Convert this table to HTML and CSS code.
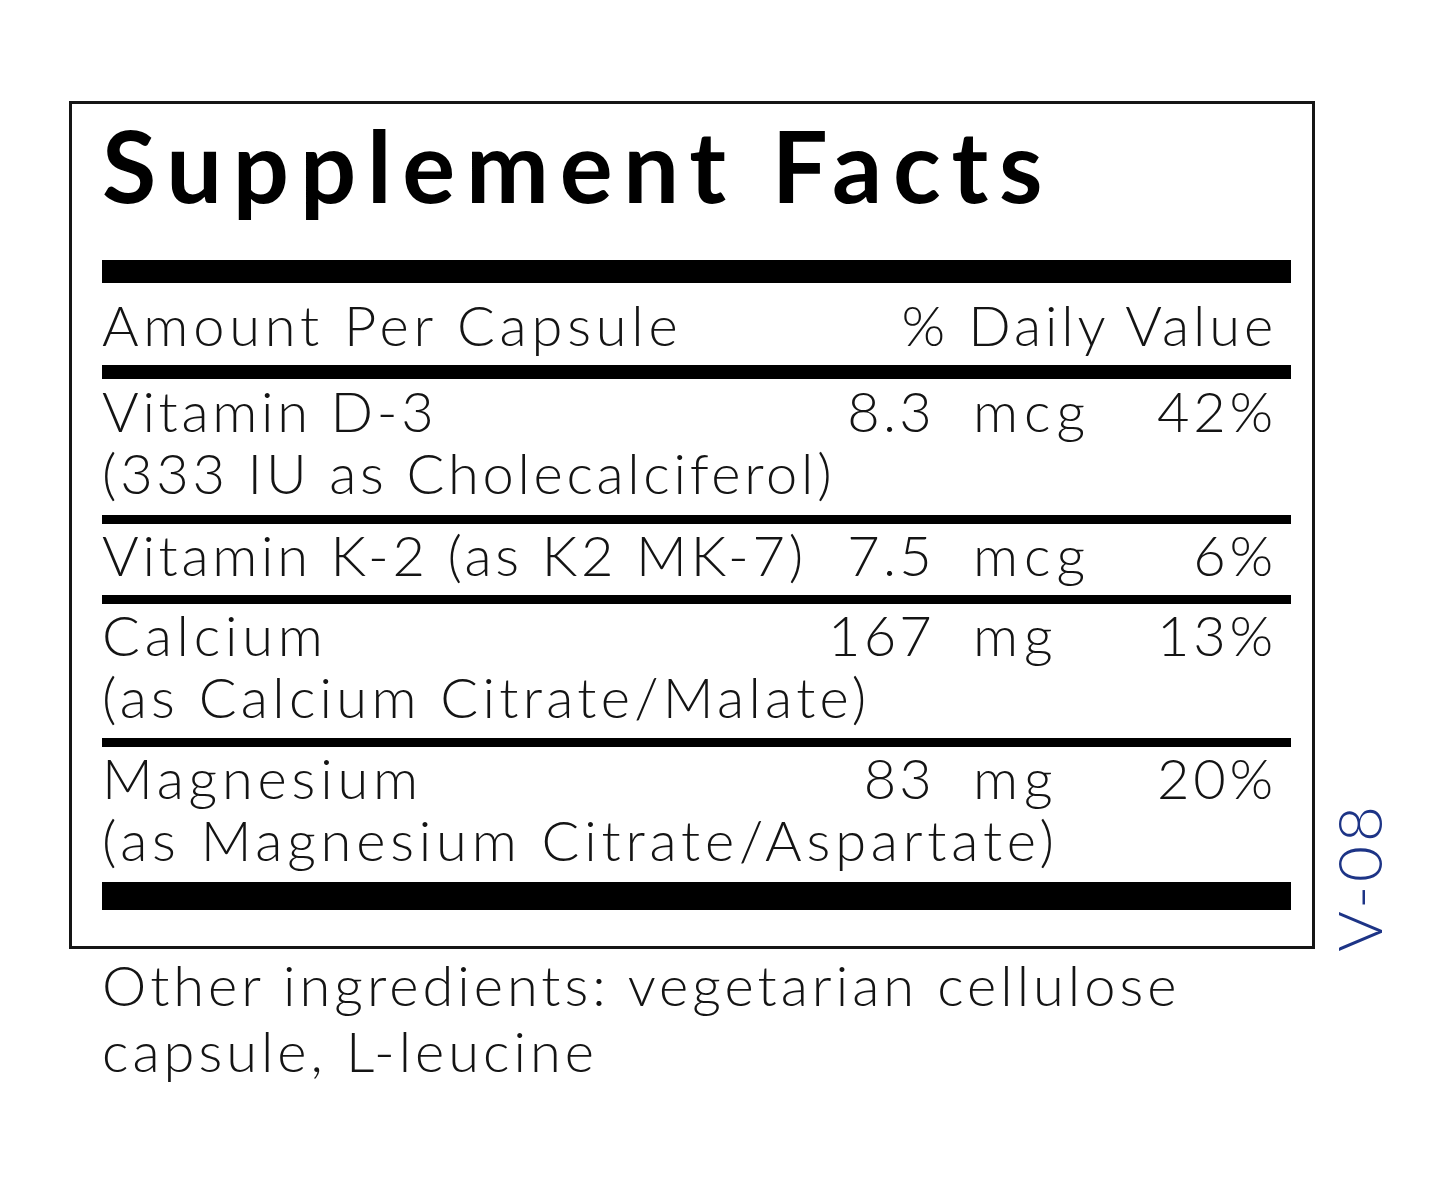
FILE: index.html
```html
<!DOCTYPE html>
<html lang="en">
<head>
<meta charset="utf-8">
<title>Supplement Facts</title>
<link rel="stylesheet" href="styles.css">
</head>
<body>
<main class="page">
  <div class="label-wrap">
    <section class="label">
      <h1 class="title">Supplement Facts</h1>
      <div class="bar bar-top"></div>
      <div class="head-row">
        <span>Amount Per Capsule</span>
        <span class="head-dv">% Daily Value</span>
      </div>
      <div class="bar bar-mid"></div>
      <div class="row row-d3">
        <span class="name tight">Vitamin D-3</span>
        <span class="amt">8.3</span>
        <span class="unit">mcg</span>
        <span class="pct">42%</span>
        <span class="sub tight">(333 IU as Cholecalciferol)</span>
      </div>
      <div class="bar bar-thin"></div>
      <div class="row row-k2">
        <span class="name tight">Vitamin K-2 (as K2 MK-7)</span>
        <span class="amt">7.5</span>
        <span class="unit">mcg</span>
        <span class="pct">6%</span>
      </div>
      <div class="bar bar-thin"></div>
      <div class="row row-ca">
        <span class="name">Calcium</span>
        <span class="amt">167</span>
        <span class="unit">mg</span>
        <span class="pct">13%</span>
        <span class="sub semi">(as Calcium Citrate/Malate)</span>
      </div>
      <div class="bar bar-thin"></div>
      <div class="row row-mg">
        <span class="name">Magnesium</span>
        <span class="amt">83</span>
        <span class="unit">mg</span>
        <span class="pct">20%</span>
        <span class="sub">(as Magnesium Citrate/Aspartate)</span>
      </div>
      <div class="bar bar-bottom"></div>
    </section>
    <div class="version">V-08</div>
  </div>
  <p class="other">Other ingredients: vegetarian cellulose capsule, L-leucine</p>
</main>
</body>
</html>
```
FILE: styles.css
```css
html, body {
  margin: 0;
  padding: 0;
  background: #ffffff;
}

body {
  font-family: "Lato", "Liberation Sans", sans-serif;
  color: #141414;
}

.page {
  padding: 101px 0 0 69px;
}

.label-wrap {
  display: flex;
  align-items: flex-end;
}

.label {
  border: 3px solid #151515;
  padding: 0 21px 36px 30px;
  box-sizing: content-box;
  width: 1189px;
}

.title {
  margin: 0 0 46px;
  padding-top: 11px;
  font-size: 99px;
  line-height: 99px;
  font-weight: 700;
  letter-spacing: 10.8px;
  color: #000;
}

.bar {
  background: #000;
}

.bar-top { height: 23px; }
.bar-mid { height: 14px; }
.bar-thin { height: 9px; }
.bar-bottom { height: 28px; }

.head-row {
  display: flex;
  justify-content: space-between;
  font-size: 56px;
  font-weight: 300;
  line-height: 63px;
  padding: 10px 14px 9px 0;
  letter-spacing: 4.8px;
}

.head-dv {
  letter-spacing: 3.9px;
}

.row {
  display: grid;
  grid-template-columns: 1fr auto 154px 150px;
  font-size: 56px;
  font-weight: 300;
  line-height: 62px;
  padding-right: 14px;
  letter-spacing: 4.8px;
}

.row-d3 { padding-top: 1px; padding-bottom: 11px; }
.row-k2 { padding-top: 0; padding-bottom: 9px; }
.row-ca { padding-top: 0; padding-bottom: 10px; }
.row-mg { padding-top: 0; padding-bottom: 11px; }

.name {
  white-space: nowrap;
}

.tight {
  letter-spacing: 3.7px;
}

.semi {
  letter-spacing: 4.3px;
}

.amt {
  text-align: right;
  padding-right: 38px;
  letter-spacing: 3.2px;
}

.unit {
  text-align: left;
  letter-spacing: 6px;
}

.pct {
  text-align: right;
  letter-spacing: 3.8px;
}

.sub {
  grid-column: 1 / -1;
  white-space: nowrap;
}

.version {
  margin-left: 19px;
  margin-bottom: -3px;
  writing-mode: vertical-rl;
  transform: rotate(180deg);
  font-size: 62px;
  line-height: 48px;
  font-weight: 300;
  color: #1d3486;
  letter-spacing: 4px;
}

.other {
  margin: 3px 0 0 33px;
  width: 1180px;
  font-size: 56px;
  font-weight: 300;
  line-height: 66px;
  letter-spacing: 4px;
}
```
